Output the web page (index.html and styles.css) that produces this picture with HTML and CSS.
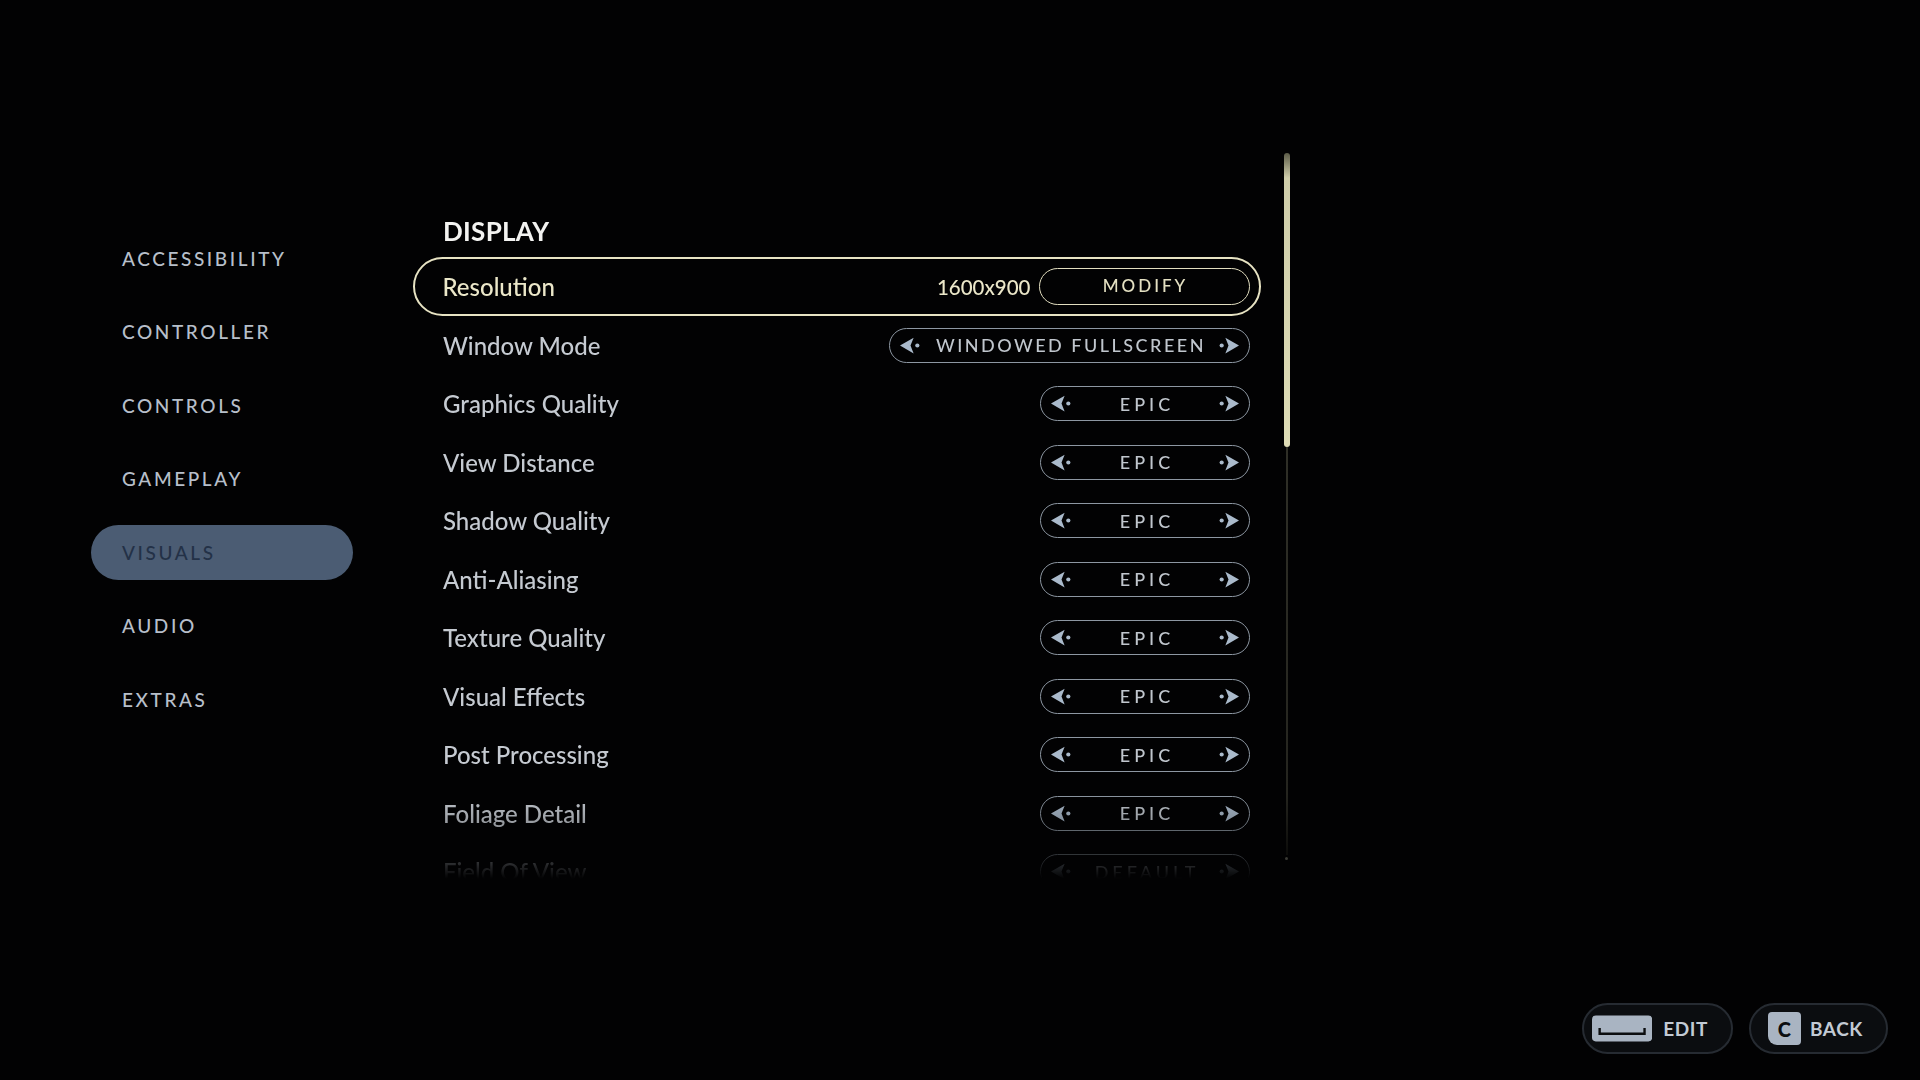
FILE: index.html
```html
<!DOCTYPE html>
<html>

<head>
  <meta charset="UTF-8">
  <meta name="viewport" content="width=device-width, initial-scale=1.0">
  <title>Options - Visuals</title>
  <link rel="stylesheet" href="styles.css">
</head>

<body>
  <div class="screen">
    <nav class="menu">
      <div class="menu-item">ACCESSIBILITY</div>
      <div class="menu-item">CONTROLLER</div>
      <div class="menu-item">CONTROLS</div>
      <div class="menu-item">GAMEPLAY</div>
      <div class="menu-item active">VISUALS</div>
      <div class="menu-item">AUDIO</div>
      <div class="menu-item">EXTRAS</div>
    </nav>

    <section class="settings">
      <div class="list">
        <h2 class="heading">DISPLAY</h2>

        <div class="row focused">
          <span class="label">Resolution</span>
          <div class="value">
            <span class="current">1600x900</span>
            <span class="modify">MODIFY</span>
          </div>
        </div>

        <div class="row">
          <span class="label">Window Mode</span>
          <div class="picker wide">
            <svg class="arrow" viewBox="0 0 20 16"><path d="M0 8 L13 0.5 L10 8 L13 15.5 Z"/><circle cx="16.5" cy="8" r="2"/></svg>
            <span class="option">WINDOWED FULLSCREEN</span>
            <svg class="arrow" viewBox="0 0 20 16"><path d="M20 8 L7 0.5 L10 8 L7 15.5 Z"/><circle cx="3.5" cy="8" r="2"/></svg>
          </div>
        </div>

        <div class="row">
          <span class="label">Graphics Quality</span>
          <div class="picker">
            <svg class="arrow" viewBox="0 0 20 16"><path d="M0 8 L13 0.5 L10 8 L13 15.5 Z"/><circle cx="16.5" cy="8" r="2"/></svg>
            <span class="option">EPIC</span>
            <svg class="arrow" viewBox="0 0 20 16"><path d="M20 8 L7 0.5 L10 8 L7 15.5 Z"/><circle cx="3.5" cy="8" r="2"/></svg>
          </div>
        </div>

        <div class="row">
          <span class="label">View Distance</span>
          <div class="picker">
            <svg class="arrow" viewBox="0 0 20 16"><path d="M0 8 L13 0.5 L10 8 L13 15.5 Z"/><circle cx="16.5" cy="8" r="2"/></svg>
            <span class="option">EPIC</span>
            <svg class="arrow" viewBox="0 0 20 16"><path d="M20 8 L7 0.5 L10 8 L7 15.5 Z"/><circle cx="3.5" cy="8" r="2"/></svg>
          </div>
        </div>

        <div class="row">
          <span class="label">Shadow Quality</span>
          <div class="picker">
            <svg class="arrow" viewBox="0 0 20 16"><path d="M0 8 L13 0.5 L10 8 L13 15.5 Z"/><circle cx="16.5" cy="8" r="2"/></svg>
            <span class="option">EPIC</span>
            <svg class="arrow" viewBox="0 0 20 16"><path d="M20 8 L7 0.5 L10 8 L7 15.5 Z"/><circle cx="3.5" cy="8" r="2"/></svg>
          </div>
        </div>

        <div class="row">
          <span class="label">Anti-Aliasing</span>
          <div class="picker">
            <svg class="arrow" viewBox="0 0 20 16"><path d="M0 8 L13 0.5 L10 8 L13 15.5 Z"/><circle cx="16.5" cy="8" r="2"/></svg>
            <span class="option">EPIC</span>
            <svg class="arrow" viewBox="0 0 20 16"><path d="M20 8 L7 0.5 L10 8 L7 15.5 Z"/><circle cx="3.5" cy="8" r="2"/></svg>
          </div>
        </div>

        <div class="row">
          <span class="label">Texture Quality</span>
          <div class="picker">
            <svg class="arrow" viewBox="0 0 20 16"><path d="M0 8 L13 0.5 L10 8 L13 15.5 Z"/><circle cx="16.5" cy="8" r="2"/></svg>
            <span class="option">EPIC</span>
            <svg class="arrow" viewBox="0 0 20 16"><path d="M20 8 L7 0.5 L10 8 L7 15.5 Z"/><circle cx="3.5" cy="8" r="2"/></svg>
          </div>
        </div>

        <div class="row">
          <span class="label">Visual Effects</span>
          <div class="picker">
            <svg class="arrow" viewBox="0 0 20 16"><path d="M0 8 L13 0.5 L10 8 L13 15.5 Z"/><circle cx="16.5" cy="8" r="2"/></svg>
            <span class="option">EPIC</span>
            <svg class="arrow" viewBox="0 0 20 16"><path d="M20 8 L7 0.5 L10 8 L7 15.5 Z"/><circle cx="3.5" cy="8" r="2"/></svg>
          </div>
        </div>

        <div class="row">
          <span class="label">Post Processing</span>
          <div class="picker">
            <svg class="arrow" viewBox="0 0 20 16"><path d="M0 8 L13 0.5 L10 8 L13 15.5 Z"/><circle cx="16.5" cy="8" r="2"/></svg>
            <span class="option">EPIC</span>
            <svg class="arrow" viewBox="0 0 20 16"><path d="M20 8 L7 0.5 L10 8 L7 15.5 Z"/><circle cx="3.5" cy="8" r="2"/></svg>
          </div>
        </div>

        <div class="row">
          <span class="label">Foliage Detail</span>
          <div class="picker">
            <svg class="arrow" viewBox="0 0 20 16"><path d="M0 8 L13 0.5 L10 8 L13 15.5 Z"/><circle cx="16.5" cy="8" r="2"/></svg>
            <span class="option">EPIC</span>
            <svg class="arrow" viewBox="0 0 20 16"><path d="M20 8 L7 0.5 L10 8 L7 15.5 Z"/><circle cx="3.5" cy="8" r="2"/></svg>
          </div>
        </div>

        <div class="row">
          <span class="label">Field Of View</span>
          <div class="picker">
            <svg class="arrow" viewBox="0 0 20 16"><path d="M0 8 L13 0.5 L10 8 L13 15.5 Z"/><circle cx="16.5" cy="8" r="2"/></svg>
            <span class="option">DEFAULT</span>
            <svg class="arrow" viewBox="0 0 20 16"><path d="M20 8 L7 0.5 L10 8 L7 15.5 Z"/><circle cx="3.5" cy="8" r="2"/></svg>
          </div>
        </div>
      </div>

      <div class="scrollbar">
        <div class="thumb"></div>
        <div class="track"></div>
        <div class="track-end"></div>
      </div>
    </section>
  </div>

  <footer class="prompts">
    <div class="prompt edit">
      <svg class="key-space" viewBox="0 0 63 27">
        <rect x="0" y="0" width="63" height="27" rx="4" fill="#a9b4c2"/>
        <path d="M8 13 V19 H55 V13" fill="none" stroke="#0b0d0f" stroke-width="2.5"/>
      </svg>
      <span>EDIT</span>
    </div>
    <div class="prompt back">
      <span class="key-c">C</span>
      <span>BACK</span>
    </div>
  </footer>
</body>

</html>
```

FILE: styles.css
```css
body {
  background: #020203;
  color: #c3c9d0;
  font-family: Lato, "Open Sans", sans-serif;
  height: 1080px;
  margin: 0;
  overflow: hidden;
  position: relative;
}

.screen {
  display: flex;
  align-items: flex-start;
  padding-left: 91px;
}

/* left menu */

.menu {
  display: flex;
  flex-direction: column;
  gap: 18.5px;
  margin-top: 230.5px;
  width: 262px;
}

.menu-item {
  align-items: center;
  border-radius: 28px;
  box-sizing: border-box;
  color: #b7bfca;
  display: flex;
  font-size: 19px;
  font-weight: 500;
  height: 55px;
  letter-spacing: 2.6px;
  padding-left: 31px;
}

.menu-item.active {
  background: #4b5c73;
  color: #233147;
}

/* settings list */

.settings {
  display: flex;
  align-items: flex-start;
  gap: 22px;
  margin-left: 60px;
  margin-top: 153px;
}

.list {
  height: 730px;
  overflow: hidden;
  width: 848px;
  -webkit-mask-image: linear-gradient(to bottom, #000 0, #000 640px, rgba(0, 0, 0, 0.75) 672px, rgba(0, 0, 0, 0.25) 708px, transparent 726px);
  mask-image: linear-gradient(to bottom, #000 0, #000 640px, rgba(0, 0, 0, 0.75) 672px, rgba(0, 0, 0, 0.25) 708px, transparent 726px);
}

.heading {
  color: #f3f3f1;
  font-size: 26px;
  font-weight: 700;
  letter-spacing: 0.3px;
  line-height: 32px;
  margin: 62px 0 10px 30px;
}

.row {
  align-items: center;
  box-sizing: border-box;
  display: flex;
  height: 58.5px;
  justify-content: space-between;
  padding: 0 11px 0 30px;
}

.row.focused {
  border: 2.5px solid #e7e3c3;
  border-radius: 30px;
  height: 59px;
  padding: 0 9.5px 0 27.5px;
}

.label {
  font-size: 24px;
  font-weight: 500;
  color: #c5cad1;
}

.focused .label {
  color: #ebe7c9;
}

.value {
  align-items: center;
  display: flex;
  gap: 8px;
}

.current {
  color: #ebe7c9;
  font-size: 20.5px;
  font-weight: 500;
}

.modify {
  border: 1.5px solid #e2dec0;
  border-radius: 19px;
  box-sizing: border-box;
  color: #e4e0c2;
  font-size: 17px;
  font-weight: 500;
  height: 37px;
  letter-spacing: 3px;
  line-height: 34px;
  padding-left: 3px;
  text-align: center;
  width: 211px;
}

.picker {
  align-items: center;
  border: 1.5px solid #8d97a2;
  border-radius: 18px;
  box-sizing: border-box;
  display: flex;
  height: 35px;
  justify-content: space-between;
  padding: 0 10px;
  width: 210px;
}

.picker.wide {
  gap: 12px;
  width: auto;
}

.arrow {
  fill: #aabacb;
  flex: none;
  height: 17px;
  width: 21px;
}

.option {
  color: #c0c6cd;
  font-size: 18px;
  font-weight: 500;
  letter-spacing: 4px;
  padding-left: 4px;
}

.wide .option {
  letter-spacing: 2.5px;
  padding-left: 2.5px;
}

/* scrollbar */

.scrollbar {
  align-items: center;
  display: flex;
  flex-direction: column;
  width: 7px;
}

.thumb {
  background: linear-gradient(to bottom, #5c5c48 0, #cfcdaa 25px, #dedcb6 100%);
  border-radius: 4px;
  height: 294px;
  width: 6px;
}

.track {
  background: linear-gradient(to bottom, #2f2f27 0, #25251f 85%, #0c0c0a 100%);
  height: 408px;
  width: 2px;
}

.track-end {
  background: #3a3a34;
  border-radius: 50%;
  height: 3px;
  margin-top: 2px;
  width: 3px;
}

/* button prompts */

.prompts {
  bottom: 26px;
  display: flex;
  gap: 16px;
  position: absolute;
  right: 32px;
}

.prompt {
  align-items: center;
  background: #0b0d10;
  border: 2px solid #262b32;
  border-radius: 26px;
  box-sizing: border-box;
  color: #c2cad4;
  display: flex;
  font-size: 19px;
  font-weight: 700;
  gap: 11px;
  height: 51px;
  letter-spacing: 0.6px;
  padding-right: 23px;
}

.prompt.edit {
  padding-left: 8px;
  width: 151px;
}

.prompt.back {
  gap: 9px;
  padding-left: 17px;
  width: 139px;
}

.key-space {
  height: 27px;
  width: 63px;
}

.key-c {
  align-items: center;
  background: #a9b4c2;
  border-radius: 4px 4px 4px 9px;
  color: #0b0d10;
  display: flex;
  font-size: 20px;
  font-weight: 900;
  height: 33px;
  justify-content: center;
  letter-spacing: 0;
  width: 33px;
}
```
